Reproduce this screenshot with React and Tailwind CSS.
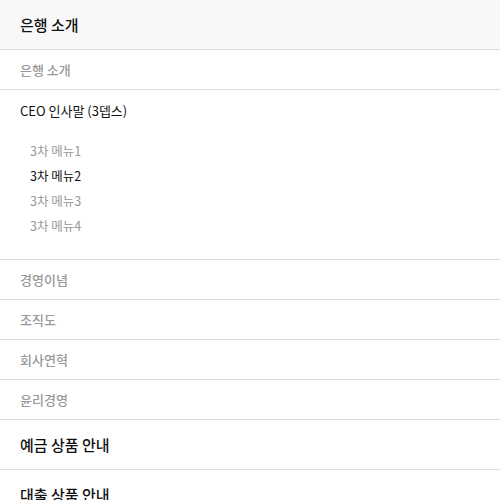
import React from 'react';

const FONT = { fontFamily: '"Noto Sans CJK KR", "Noto Sans", sans-serif' };

const subMenus = [
    { label: '3차 메뉴1', active: false },
    { label: '3차 메뉴2', active: true },
    { label: '3차 메뉴3', active: false },
    { label: '3차 메뉴4', active: false },
];

const grayRows = ['경영이념', '조직도', '회사연혁', '윤리경영'];

const App = () => {
    return (
        <div className="w-[500px] h-[500px] overflow-hidden bg-white" style={FONT}>
            {/* Top title */}
            <div className="h-[50px] flex items-center px-5 bg-[#f8f8f8] border-b border-[#dddddd]">
                <h2 className="text-[15px] leading-none font-medium text-[#111]">은행 소개</h2>
            </div>

            <div className="h-[40px] flex items-center px-5 border-b border-[#dddddd]">
                <p className="text-[13px] leading-none font-medium text-[#999]">은행 소개</p>
            </div>

            {/* 2depth opened */}
            <div className="border-b border-[#dddddd] pb-[20px]">
                <div className="h-[40px] flex items-center px-5">
                    <p className="text-[13px] leading-none text-[#111]">CEO 인사말 (3뎁스)</p>
                </div>
                <ul className="pt-[9px] pl-[30px]">
                    {subMenus.map((m) => (
                        <li
                            key={m.label}
                            className={`h-[25px] flex items-center text-[12.5px] leading-none ${m.active ? 'text-[#111]' : 'text-[#999]'}`}
                        >
                            {m.label}
                        </li>
                    ))}
                </ul>
            </div>

            {grayRows.map((r) => (
                <div key={r} className="h-[40px] flex items-center px-5 border-b border-[#dddddd]">
                    <p className="text-[13px] leading-none font-medium text-[#999]">{r}</p>
                </div>
            ))}

            <div className="h-[50px] flex items-center px-5 border-b border-[#dddddd]">
                <h3 className="text-[15px] leading-none font-medium text-[#111]">예금 상품 안내</h3>
            </div>
            <div className="h-[50px] flex items-center px-5 border-b border-[#dddddd]">
                <h3 className="text-[15px] leading-none font-medium text-[#111]">대출 상품 안내</h3>
            </div>
        </div>
    );
};

export default App;
